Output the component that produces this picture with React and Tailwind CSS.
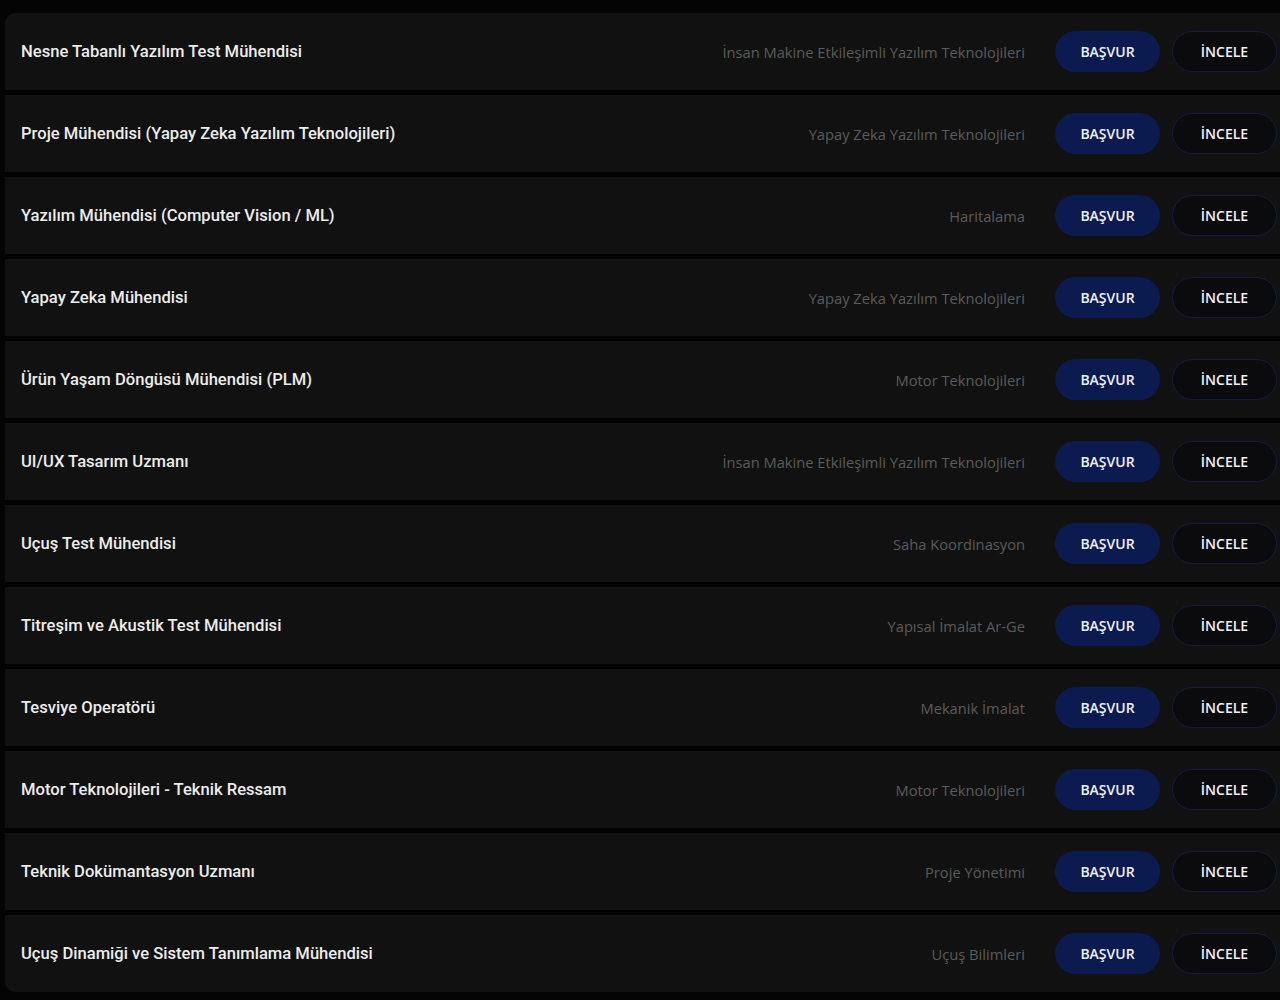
import React from "react";

const jobs = [
  ["Nesne Tabanlı Yazılım Test Mühendisi", "İnsan Makine Etkileşimli Yazılım Teknolojileri"],
  ["Proje Mühendisi (Yapay Zeka Yazılım Teknolojileri)", "Yapay Zeka Yazılım Teknolojileri"],
  ["Yazılım Mühendisi (Computer Vision / ML)", "Haritalama"],
  ["Yapay Zeka Mühendisi", "Yapay Zeka Yazılım Teknolojileri"],
  ["Ürün Yaşam Döngüsü Mühendisi (PLM)", "Motor Teknolojileri"],
  ["UI/UX Tasarım Uzmanı", "İnsan Makine Etkileşimli Yazılım Teknolojileri"],
  ["Uçuş Test Mühendisi", "Saha Koordinasyon"],
  ["Titreşim ve Akustik Test Mühendisi", "Yapısal İmalat Ar-Ge"],
  ["Tesviye Operatörü", "Mekanik İmalat"],
  ["Motor Teknolojileri - Teknik Ressam", "Motor Teknolojileri"],
  ["Teknik Dokümantasyon Uzmanı", "Proje Yönetimi"],
  ["Uçuş Dinamiği ve Sistem Tanımlama Mühendisi", "Uçuş Bilimleri"],
];

function JobRow({ title, dept }) {
  return (
    <div className="flex h-[77px] items-center bg-[#111111] pl-4 pr-[3px] shadow-[0_2px_3px_rgba(0,0,0,0.6)]">
      <div className="flex-1 pt-[2px] text-[16.6px] font-medium text-[#ececec] font-['Roboto',sans-serif]">
        {title}
      </div>
      <div className="mr-[30px] pt-[1px] text-[14.7px] text-[#5b5b5b] font-['Open_Sans',sans-serif]">
        {dept}
      </div>
      <button className="flex h-[41px] w-[105px] items-center justify-center rounded-full bg-[#0c1b4f] text-[14px] font-semibold text-[#eef0f8] font-['Open_Sans',sans-serif]">
        BAŞVUR
      </button>
      <button className="ml-[12px] flex h-[41px] w-[105px] items-center justify-center rounded-full border-[1.5px] border-[#141d40] bg-[#0b0b0e] text-[14px] font-semibold text-[#f3f0f4] font-['Open_Sans',sans-serif]">
        İNCELE
      </button>
    </div>
  );
}

export default function App() {
  return (
    <div className="min-h-[1000px] w-[1280px] overflow-hidden bg-[#040404] pl-[5px] pt-[13px]">
      <div className="flex flex-col gap-[5px] overflow-hidden rounded-l-[10px]">
        {jobs.map(([t, d]) => (
          <JobRow key={t} title={t} dept={d} />
        ))}
      </div>
    </div>
  );
}
